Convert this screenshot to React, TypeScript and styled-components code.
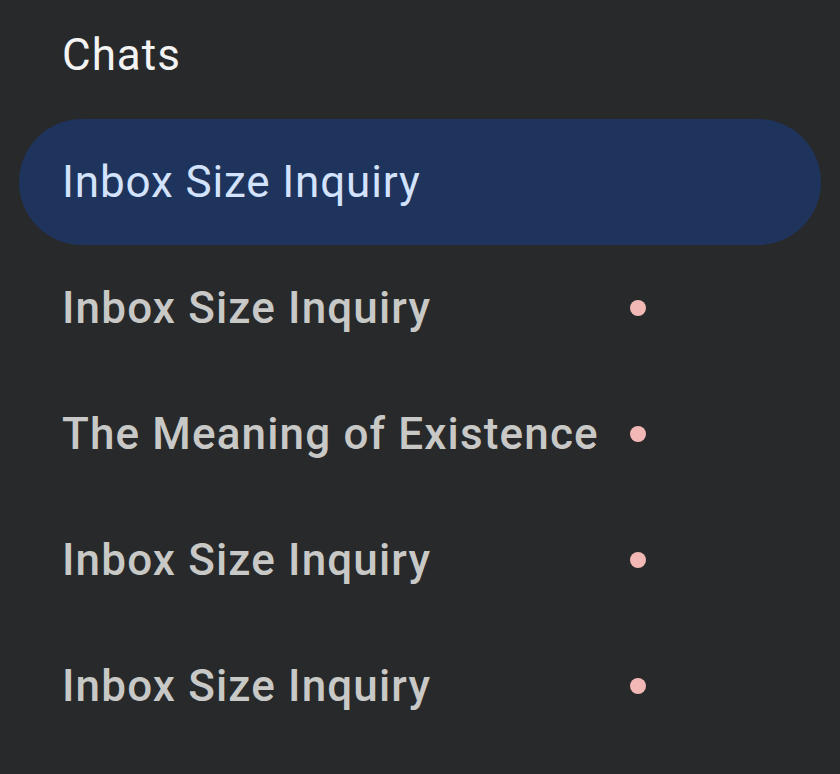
import React from "react";
import styled, { createGlobalStyle } from "styled-components";

const GlobalStyle = createGlobalStyle`
  html, body {
    margin: 0;
    padding: 0;
    background: #28292b;
  }
  body {
    font-family: Roboto, "Liberation Sans", sans-serif;
  }
`;

const Sidebar = styled.nav`
  width: 840px;
  height: 774px;
  background: #28292b;
  overflow: hidden;
  box-sizing: border-box;
  padding: 25px 19px 0;
`;

const SectionTitle = styled.h2`
  margin: 0 0 34px;
  padding-left: 43px;
  font-size: 44px;
  line-height: 60px;
  font-weight: 400;
  letter-spacing: 1px;
  color: #f3f3f3;
`;

const ChatList = styled.ul`
  list-style: none;
  margin: 0;
  padding: 0;
`;

const ChatRow = styled.li<{ $active?: boolean }>`
  display: flex;
  align-items: center;
  gap: 16px;
  height: 126px;
  padding: 0 175px 0 43px;
  border-radius: 63px;
  background: ${(p) => (p.$active ? "#1f345c" : "transparent")};
  color: ${(p) => (p.$active ? "#d3e3fd" : "#c8c9c7")};
  font-size: 44px;
  font-weight: ${(p) => (p.$active ? 400 : 500)};
  letter-spacing: ${(p) => (p.$active ? "0.85px" : "1.15px")};
`;

const ChatTitle = styled.span`
  flex: 1;
  min-width: 0;
  white-space: nowrap;
  overflow: hidden;
  text-overflow: ellipsis;
`;

const UnreadDot = styled.span`
  flex: 0 0 auto;
  width: 16px;
  height: 16px;
  border-radius: 50%;
  background: #f2b8b5;
`;

const chats = [
  { title: "Inbox Size Inquiry", active: true, unread: false },
  { title: "Inbox Size Inquiry", active: false, unread: true },
  { title: "The Meaning of Existence", active: false, unread: true },
  { title: "Inbox Size Inquiry", active: false, unread: true },
  { title: "Inbox Size Inquiry", active: false, unread: true },
];

export default function App() {
  return (
    <>
      <GlobalStyle />
      <Sidebar>
        <SectionTitle>Chats</SectionTitle>
        <ChatList>
          {chats.map((c, i) => (
            <ChatRow key={i} $active={c.active}>
              <ChatTitle>{c.title}</ChatTitle>
              {c.unread && <UnreadDot />}
            </ChatRow>
          ))}
        </ChatList>
      </Sidebar>
    </>
  );
}
